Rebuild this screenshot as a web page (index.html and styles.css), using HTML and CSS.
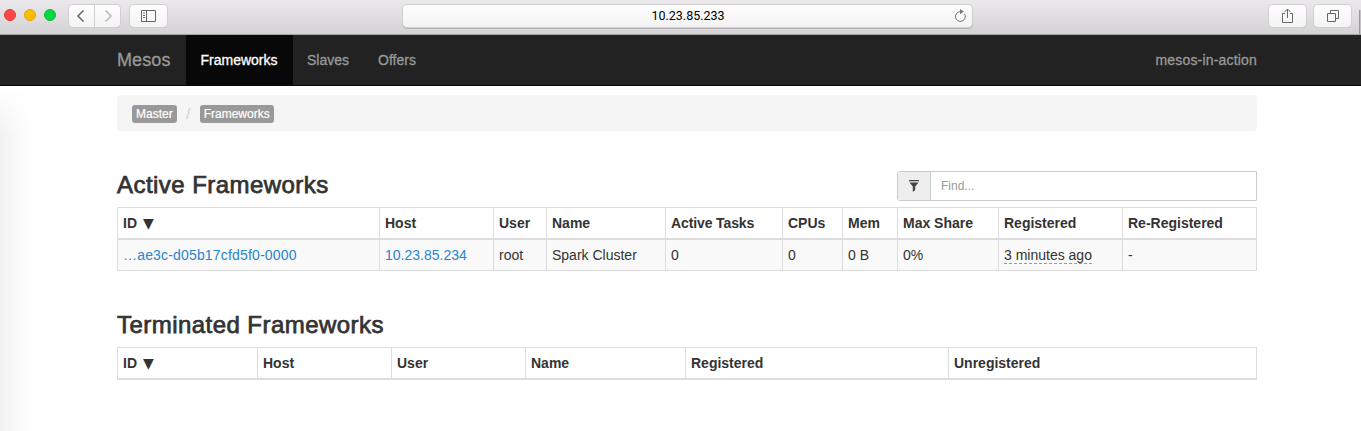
FILE: index.html
```html
<!DOCTYPE html>
<html lang="en">
<head>
<meta charset="utf-8">
<title>Mesos</title>
<link rel="stylesheet" href="styles.css">
</head>
<body>
<header class="toolbar">
  <div class="lights"><i class="light red"></i><i class="light amber"></i><i class="light green"></i></div>
  <div class="history">
    <span class="tool back"><svg width="26" height="22" viewBox="0 0 26 22"><path d="M14.500 5.500 9 11 14.500 16.500" fill="none" stroke="#666" stroke-width="1.500"/></svg></span>
    <span class="tool forward"><svg width="25" height="22" viewBox="0 0 25 22"><path d="M10.500 5.500 16 11 10.500 16.500" fill="none" stroke="#b9b9b9" stroke-width="1.500"/></svg></span>
  </div>
  <span class="tool sidebar"><svg width="37" height="22" viewBox="0 0 37 22"><path d="M11.500 5.500h14v11h-14zM16.500 5.500v11M13 8h2M13 10.500h2M13 12.500h2" fill="none" stroke="#666"/></svg></span>
  <div class="address"><span class="url">10.23.85.233</span><svg class="reload" width="14" height="16" viewBox="0 0 14 16"><path d="M11.500 5.800A4.900 4.900 0 1 1 7.700 3.600" fill="none" stroke="#777"/><path d="M7 1v5.200l3.800-2.600z" fill="#777"/></svg></div>
  <span class="tool share"><svg width="37" height="22" viewBox="0 0 37 22"><path d="M16 8.500h-2.500v9h10v-9H21M18.500 13V4M15.500 7l3-3 3 3" fill="none" stroke="#666"/></svg></span>
  <span class="tool tabs"><svg width="37" height="22" viewBox="0 0 37 22"><path d="M13.500 8.500h8v8h-8zM16.500 8V5.500h8v8H22" fill="none" stroke="#666"/></svg></span>
  <i class="edge"></i>
</header>
<nav class="navbar">
  <div class="container nav-row">
    <a class="brand"><span class="t">Mesos</span></a>
    <a class="link active"><span class="t">Frameworks</span></a>
    <a class="link"><span class="t">Slaves</span></a>
    <a class="link"><span class="t">Offers</span></a>
    <span class="cluster t">mesos-in-action</span>
  </div>
</nav>
<div class="page">
  <main class="container">
    <div class="breadcrumb"><span class="badge">Master</span><span class="slash">/</span><span class="badge">Frameworks</span></div>
    <section class="section">
      <div class="heading-row">
        <h3 class="heading">Active Frameworks</h3>
        <div class="search"><span class="addon"><svg width="12" height="12" viewBox="0 0 12 12"><path d="M1 0h10v1.200H1zM1.500 2.500h9L7.200 6.500V10L4.800 12V6.500z" fill="#444"/></svg></span><span class="find">Find...</span></div>
      </div>
      <table class="table">
        <colgroup><col class="w262"><col class="w114"><col class="w53"><col class="w119"><col class="w117"><col class="w60"><col class="w55"><col class="w101"><col class="w124"><col class="w134"></colgroup>
        <thead><tr><th>ID <span class="sort">▼</span></th><th>Host</th><th>User</th><th>Name</th><th class="tight">Active Tasks</th><th>CPUs</th><th>Mem</th><th>Max Share</th><th>Registered</th><th>Re-Registered</th></tr></thead>
        <tbody><tr><td><a class="ref id">…ae3c-d05b17cfd5f0-0000</a></td><td><a class="ref">10.23.85.234</a></td><td>root</td><td>Spark Cluster</td><td>0</td><td>0</td><td>0 B</td><td>0%</td><td><span class="ago">3 minutes ago</span></td><td>-</td></tr></tbody>
      </table>
    </section>
    <section class="section terminated">
      <div class="heading-row"><h3 class="heading">Terminated Frameworks</h3></div>
      <table class="table">
        <colgroup><col class="w140"><col class="w134"><col class="w134"><col class="w160"><col class="w263"><col class="w308"></colgroup>
        <thead><tr><th>ID <span class="sort">▼</span></th><th>Host</th><th>User</th><th>Name</th><th>Registered</th><th>Unregistered</th></tr></thead>
      </table>
    </section>
  </main>
</div>
</body>
</html>
```
FILE: styles.css
```css
* { box-sizing: border-box; }
body { margin: 0; background: #fff; color: #333; font: 14px/20px "Liberation Sans", Arial, sans-serif; height: 431px; overflow: hidden; }
svg { display: block; }
.container { width: 1140px; margin: 0 auto 0 117px; }

.toolbar { display: flex; align-items: flex-start; height: 35px; padding: 5px 0 0 4px; background: linear-gradient(#ebe9eb, #d4d2d4); border-bottom: 1px solid #a3a3a5; }
.lights { display: flex; gap: 8px; padding-top: 4px; width: 65px; }
.light { width: 12px; height: 12px; border-radius: 50%; border: 1px solid; }
.red { background: #ff4745; border-color: #e0383a; }
.amber { background: #ffbd00; border-color: #e3a40c; }
.green { background: #00d742; border-color: #0dbb38; }
.history { display: flex; gap: 1px; }
.tool { height: 22px; background: linear-gradient(#fefefe, #f3f3f3); border-radius: 4px; box-shadow: 0 0 0 1px #d0ced0, 0 1px 0 0 #b5b3b5; }
.back { width: 25px; border-radius: 4px 0 0 4px; }
.forward { width: 25px; border-radius: 0 4px 4px 0; }
.sidebar { width: 37px; margin-left: 10px; }
.address { display: flex; align-items: center; width: 569px; height: 22px; margin-left: 236px; padding: 0 5px 0 0; background: linear-gradient(#fdfdfd, #f2f2f2); border-radius: 4px; box-shadow: 0 0 0 1px #d0ced0, 0 1px 0 1px #b5b3b5; }
.url { flex: 1; padding-left: 20px; text-align: center; color: #000; font: 12.500px/22px Roboto, sans-serif; }
.share { width: 37px; margin-left: 297px; }
.tabs { width: 37px; margin-left: 8px; }
.edge { width: 2px; height: 24px; margin: 5px 0 0 auto; background: #c4c2c4; border-left: 1px solid #999; }

.navbar { height: 51px; background: #222; border-bottom: 1px solid #080808; color: #999; }
.nav-row { display: flex; height: 50px; line-height: 50px; }
.t { -webkit-text-stroke: .3px currentColor; }
.brand { width: 69px; font-size: 18px; letter-spacing: .1px; }
.link { padding: 0 14.500px; }
.active { width: 107px; margin-right: -.5px; background: #080808; color: #fff; }
.cluster { margin-left: auto; letter-spacing: .18px; }

.page { position: relative; height: 345px; padding-top: 9px; }
.page::before { content: ""; position: absolute; left: 0; top: 0; width: 36px; height: 100%; background: linear-gradient(90deg, #f1f1f1, #fafafa 18px, #fff 36px); -webkit-mask-image: linear-gradient(transparent, #000 50px); mask-image: linear-gradient(transparent, #000 50px); }
.breadcrumb { display: flex; align-items: center; height: 36px; padding: 1px 15px 0; background: #f5f5f5; border-radius: 4px; }
.badge { height: 18px; padding: 0 4px; border-radius: 3px; background: #999; color: #fff; font-size: 12px; line-height: 18px; -webkit-text-stroke: .2px currentColor; }
.slash { width: 23px; text-align: center; color: #ccc; font-size: 14px; }
.section { padding-top: 40px; }
.heading-row { display: flex; height: 36px; justify-content: space-between; }
.heading { margin: 0; font-size: 24px; line-height: 27px; font-weight: 400; letter-spacing: .45px; -webkit-text-stroke: .75px currentColor; }
.search { display: flex; width: 360px; height: 30px; border: 1px solid #ccc; border-radius: 3px 0 0 3px; }
.addon { width: 33px; padding: 8px 10px; background: #eee; border-right: 1px solid #ccc; }
.find { padding-left: 10px; font-size: 12px; line-height: 28px; color: #999; }
.table { width: 1140px; table-layout: fixed; border-collapse: separate; border-spacing: 0; border: solid #ddd; border-width: 1px 0 0 1px; }
.table th, .table td { padding: 5px; border-right: 1px solid #ddd; text-align: left; white-space: nowrap; line-height: 20px; }
.table th { height: 32px; border-bottom: 2px solid #ddd; }
.table td { height: 31px; border-bottom: 1px solid #ddd; background: #f9f9f9; }
.table .tight { letter-spacing: -.12px; }
.sort { display: inline-block; height: 20px; margin-left: 2px; font: 14px/20px "DejaVu Sans", sans-serif; vertical-align: top; }
.ref { color: #2a84ce; }
.id { letter-spacing: .17px; }
.ago { border-bottom: 1px dashed #999; }
.w262 { width: 262px; } .w114 { width: 114px; } .w53 { width: 53px; } .w119 { width: 119px; } .w117 { width: 117px; }
.w60 { width: 60px; } .w55 { width: 55px; } .w101 { width: 101px; } .w124 { width: 124px; } .w134 { width: 134px; }
.w140 { width: 140px; } .w160 { width: 160px; } .w263 { width: 263px; } .w308 { width: 308px; }
```
